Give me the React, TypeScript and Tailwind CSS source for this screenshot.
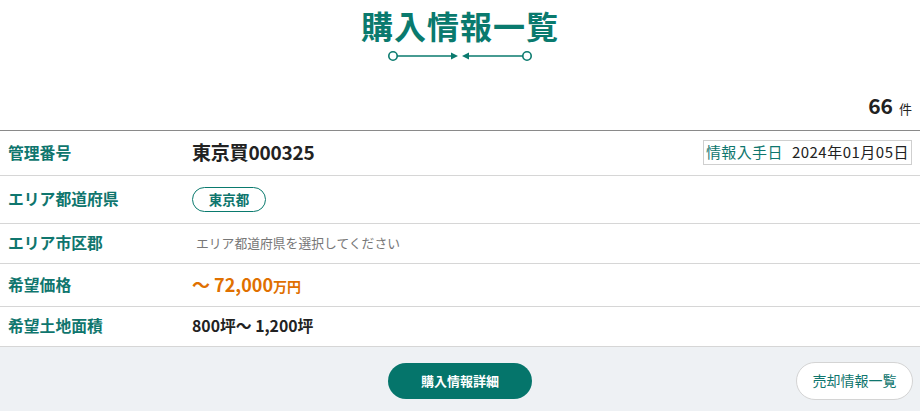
import { ReactNode } from 'react'

const font = { fontFamily: '"Noto Sans CJK JP", "Noto Sans", sans-serif' }

function Row({ label, children, className = '' }: { label: string; children: ReactNode; className?: string }) {
  return (
    <div className={`flex items-center border-b border-[#d6d6d6] ${className}`}>
      <div className="w-[192px] shrink-0 pl-[8px] text-[15.8px] font-bold text-[#0f766e]">{label}</div>
      <div className="flex flex-1 items-center">{children}</div>
    </div>
  )
}

export default function App() {
  return (
    <div className="w-[920px] h-[411px] overflow-hidden bg-white text-[#222]" style={font}>
      {/* Heading */}
      <div className="flex flex-col items-center pt-[3px]">
        <h1 className="text-[32px] font-bold leading-[44px] tracking-[1px] text-[#0a7a6e]">購入情報一覧</h1>
        <svg width="146" height="14" viewBox="0 0 146 14" className="mt-[2px]">
          <circle cx="6" cy="7" r="4.2" fill="none" stroke="#0a7a6e" strokeWidth="1.6" />
          <line x1="10" y1="7" x2="66" y2="7" stroke="#0a7a6e" strokeWidth="1.4" />
          <polygon points="64,3.5 71,7 64,10.5" fill="#0a7a6e" />
          <polygon points="82,3.5 75,7 82,10.5" fill="#0a7a6e" />
          <line x1="80" y1="7" x2="136" y2="7" stroke="#0a7a6e" strokeWidth="1.4" />
          <circle cx="140" cy="7" r="4.2" fill="none" stroke="#0a7a6e" strokeWidth="1.6" />
        </svg>
      </div>

      {/* Count */}
      <div className="mt-[27px] flex items-baseline justify-end pr-[8px]">
        <span className="text-[21px] font-bold text-[#222]">66</span>
        <span className="ml-[6px] text-[13px] text-[#222]">件</span>
      </div>

      {/* Table */}
      <div className="mt-[8px] border-t border-[#8a8a8a]">
        <Row label="管理番号" className="h-[45px]">
          <span className="text-[19px] font-bold tracking-[-0.2px] text-[#222]">東京買000325</span>
          <div className="ml-auto mr-[8px] flex h-[25px] items-center border border-[#cfcfcf] px-[2px] text-[15px]">
            <span className="tracking-[0.4px] text-[#0f766e]">情報入手日</span>
            <span className="ml-[9px] tracking-[0.5px] text-[#222]">2024年01月05日</span>
          </div>
        </Row>
        <Row label="エリア都道府県" className="h-[48px]">
          <span className="flex h-[25px] w-[74px] items-center justify-center rounded-full border border-[#0a7a6e] text-[13.5px] font-bold text-[#0f766e]">
            東京都
          </span>
        </Row>
        <Row label="エリア市区郡" className="h-[40px]">
          <span className="pl-[4px] text-[12.8px] text-[#777]">エリア都道府県を選択してください</span>
        </Row>
        <Row label="希望価格" className="h-[43px]">
          <span className="text-[18px] font-bold text-[#e07000]">
            〜 72,000<span className="text-[14px]">万円</span>
          </span>
        </Row>
        <Row label="希望土地面積" className="h-[40px]">
          <span className="text-[15.8px] font-bold text-[#222]">800坪〜 1,200坪</span>
        </Row>
      </div>

      {/* Footer */}
      <div className="relative flex h-[65px] items-start justify-center bg-[#eef1f4] pt-[16px]">
        <button className="h-[36px] w-[144px] rounded-full bg-[#05756b] text-[13px] font-bold text-white">
          購入情報詳細
        </button>
        <button className="absolute right-[7px] top-[15px] h-[38px] w-[117px] rounded-full border border-[#d4d4d4] bg-white text-[14px] text-[#0f766e]">
          売却情報一覧
        </button>
      </div>
    </div>
  )
}
